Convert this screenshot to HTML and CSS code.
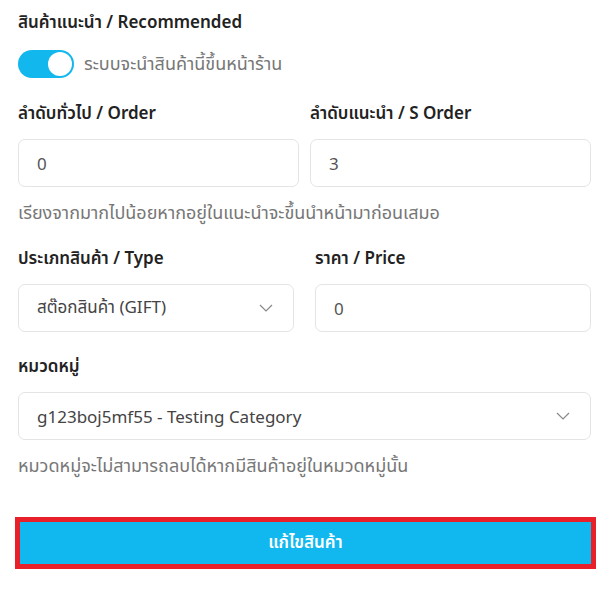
FILE: index.html
```html
<!DOCTYPE html>
<html lang="th">
<head>
  <meta charset="UTF-8" />
  <meta name="viewport" content="width=device-width, initial-scale=1" />
  <title>แก้ไขสินค้า</title>
  <link rel="stylesheet" href="styles.css">
</head>
<body>

<form class="product-form">
  <div class="field">
    <label class="label">สินค้าแนะนำ / Recommended</label>
    <div class="switch-row">
      <span class="switch on"><span class="knob"></span></span>
      <span class="switch-text">ระบบจะนำสินค้านี้ขึ้นหน้าร้าน</span>
    </div>
  </div>

  <div class="row row-tight">
    <div class="col">
      <label class="label">ลำดับทั่วไป / Order</label>
      <div class="input">0</div>
    </div>
    <div class="col">
      <label class="label">ลำดับแนะนำ / S Order</label>
      <div class="input">3</div>
    </div>
  </div>
  <p class="hint">เรียงจากมากไปน้อยหากอยู่ในแนะนำจะขึ้นนำหน้ามาก่อนเสมอ</p>

  <div class="row row-wide">
    <div class="col">
      <label class="label">ประเภทสินค้า / Type</label>
      <div class="input select">
        <span>สต๊อกสินค้า (GIFT)</span>
        <svg class="chevron" width="14" height="8" viewBox="0 0 14 8"><path d="M1 1l6 6 6-6" fill="none" stroke="#888" stroke-width="1.2"/></svg>
      </div>
    </div>
    <div class="col">
      <label class="label">ราคา / Price</label>
      <div class="input">0</div>
    </div>
  </div>

  <div class="field">
    <label class="label">หมวดหมู่</label>
    <div class="input select">
      <span>g123boj5mf55 - Testing Category</span>
      <svg class="chevron" width="14" height="8" viewBox="0 0 14 8"><path d="M1 1l6 6 6-6" fill="none" stroke="#888" stroke-width="1.2"/></svg>
    </div>
  </div>
  <p class="hint">หมวดหมู่จะไม่สามารถลบได้หากมีสินค้าอยู่ในหมวดหมู่นั้น</p>

  <button type="button" class="submit">แก้ไขสินค้า</button>
</form>

</body>
</html>
```

FILE: styles.css
```css
body {
  font-family: "Noto Sans", "Noto Sans Thai", sans-serif;
  margin: 0;
  padding: 0;
  background-color: #fff;
  color: #222;
}

.product-form {
  padding: 9px 20px 30px 18px;
}

.label {
  display: block;
  font-size: 17px;
  font-weight: 600;
  line-height: 26px;
  color: #222;
}

.switch-row {
  display: flex;
  align-items: center;
  gap: 10px;
  margin-top: 15px;
}

.switch {
  width: 56px;
  height: 28px;
  border-radius: 14px;
  background-color: #12b7ee;
  display: flex;
  align-items: center;
  justify-content: flex-end;
  padding: 0 2px;
  box-sizing: border-box;
}

.knob {
  width: 24px;
  height: 24px;
  border-radius: 50%;
  background-color: #fff;
}

.switch-text {
  font-size: 18px;
  color: #777;
}

.row {
  display: grid;
  grid-template-columns: 1fr 1fr;
  margin-top: 22px;
}

.row-tight {
  column-gap: 11px;
}

.row-wide {
  column-gap: 21px;
  margin-top: 20px;
}

.row .label,
.field .label {
  margin-bottom: 13px;
}

.field:first-child .label {
  margin-bottom: 0;
}

.row + .field {
  margin-top: 21px;
}

.input {
  height: 48px;
  box-sizing: border-box;
  border: 1px solid #e4e4e4;
  border-radius: 7px;
  padding: 0 18px;
  display: flex;
  align-items: center;
  font-size: 17px;
  color: #555;
}

.select {
  justify-content: space-between;
  color: #444;
}

.chevron {
  margin-right: 2px;
}

.hint {
  margin: 12px 0 0;
  font-size: 18px;
  line-height: 26px;
  color: #777;
}

.submit {
  display: block;
  width: 571px;
  height: 42px;
  margin: 44px 0 0 2px;
  border: none;
  background-color: #10b8ef;
  color: #fff;
  font-family: inherit;
  font-size: 17px;
  font-weight: 600;
  outline: 5px solid #e8202a;
  cursor: pointer;
}
```
